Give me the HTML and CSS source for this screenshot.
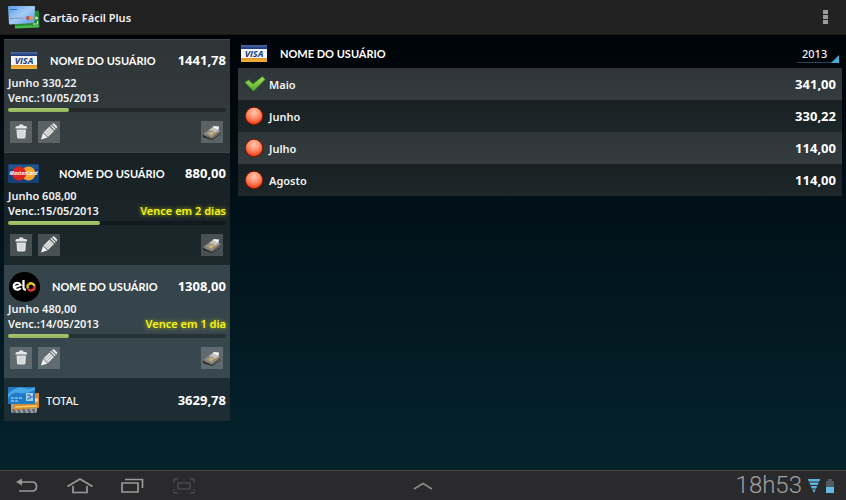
FILE: index.html
```html
<!DOCTYPE html>
<html lang="pt-BR">
<head>
    <meta charset="UTF-8">
    <meta name="viewport" content="width=device-width, initial-scale=1.0">
    <title>Cartão Fácil Plus</title>
    <link rel="stylesheet" href="styles.css">
</head>
<body>
    <!-- Shared icons -->
    <svg class="sprite" aria-hidden="true">
        <defs>
            <linearGradient id="visaBlue" x1="0" y1="0" x2="0" y2="1">
                <stop offset="0" stop-color="#4a68ae"/>
                <stop offset="1" stop-color="#1d3674"/>
            </linearGradient>
            <linearGradient id="visaGold" x1="0" y1="0" x2="0" y2="1">
                <stop offset="0" stop-color="#d9962c"/>
                <stop offset="1" stop-color="#f3b53b"/>
            </linearGradient>
            <radialGradient id="redBall" cx=".5" cy=".3" r=".7">
                <stop offset="0" stop-color="#ffc9ae"/>
                <stop offset=".5" stop-color="#ff8f6b"/>
                <stop offset="1" stop-color="#f03c14"/>
            </radialGradient>
            <linearGradient id="greenTick" x1="0" y1="0" x2="0" y2="1">
                <stop offset="0" stop-color="#a5e05a"/>
                <stop offset="1" stop-color="#4fae2c"/>
            </linearGradient>
            <linearGradient id="skyCard" x1="0" y1="0" x2="1" y2="1">
                <stop offset="0" stop-color="#5d9be6"/>
                <stop offset=".5" stop-color="#a4ccf4"/>
                <stop offset="1" stop-color="#5b93dc"/>
            </linearGradient>
        </defs>
        <symbol id="trash" viewBox="0 0 22 22">
            <path d="M5.500 7.500V6.500q0-1.500 1.500-1.500h2l.5-1.500h3.500l.5 1.500h2q1.500 0 1.500 1.500v1z" fill="#e6e8e8"/>
            <path d="M6.500 8.500h9.500l-.5 7.500q0 1.500-1.500 1.500H8.500Q7 17.500 7 16z" fill="#dfe1e1"/>
            <path d="M9.500 10v6M11.300 10v6M13 10v6" stroke="#c3c7c8" stroke-width=".6"/>
        </symbol>
        <symbol id="pencil" viewBox="0 0 22 22">
            <path d="M3 18.500l2-6.500 4.500 4.500z" fill="#f0f0f0"/>
            <path d="M5.500 11.500l6-6 4.500 4.500-6 6z" fill="#dfe1e1"/>
            <path d="M12.200 4.800l1-1 4.500 4.500-1 1zM14 3.200l.5-.5q1-.8 2 0l2.300 2.300q.8 1 0 2l-.5.500z" fill="#e9eaea"/>
            <path d="M7.500 12.500l5.500-5.500M9 14l5.500-5.500" stroke="#a5aaab" stroke-width=".7"/>
        </symbol>
        <symbol id="money" viewBox="0 0 22 22">
            <path d="M2 14l10-7 8 4v2l-9 6-9-3z" fill="#24231f"/>
            <path d="M2 13l10-7 8 4.500-9 6.500z" fill="#8b8981"/>
            <path d="M3 14l8 3.500 9-5.500" stroke="#b3b0a5" stroke-width=".6" fill="none"/>
            <path d="M8 9l4-3 6 3-4 3z" fill="#c4c3bb"/>
            <path d="M11.500 6l1.500-1 5 .5-.5 3.500z" fill="#f5f4f0"/>
            <path d="M6 12l4-3 4 2-4 3.500z" fill="#a09d92"/>
            <path d="M8 13l3-2 2 .5-2.500 3z" fill="#d9b65a"/>
        </symbol>
        <symbol id="open" viewBox="0 0 20 20">
            <circle cx="10" cy="10" r="9.300" fill="#6f1509"/>
            <circle cx="10" cy="10" r="8.300" fill="url(#redBall)"/>
        </symbol>
        <symbol id="paid" viewBox="0 0 22 18">
            <path d="M1 7.500L4.500 5l4.500 4L18.500 1.500 21 4.500 9.500 16z" fill="url(#greenTick)" stroke="#3c8e22" stroke-width=".8"/>
        </symbol>
    </svg>

    <header class="topbar">
        <svg class="app-logo" viewBox="0 0 32 23" aria-hidden="true">
            <path d="M6 7l25-2.500.5 16.500L7 22z" fill="#258a31"/>
            <path d="M7 20l24-1v2.500L7 22.500z" fill="#46b74c"/>
            <circle cx="28.500" cy="12" r="1.500" fill="#c8e8c5"/>
            <path d="M25 18h4.500v-3" stroke="#d5ead2" fill="none"/>
            <path d="M0 1q0-1 1-1h25q1 0 1 1l-.5 15q0 1-1 1L2 18.500q-1 0-1-1z" fill="url(#skyCard)"/>
            <path d="M2 3.500h7" stroke="#356fb9"/>
            <path d="M2 12.500l13-.5" stroke="#8090ad"/>
            <circle cx="20" cy="12" r="2" fill="#bd4d59"/>
            <circle cx="23" cy="12" r="2" fill="#d99b57"/>
        </svg>
        <h1 class="app-title">Cartão Fácil Plus</h1>
        <button class="menu-button" type="button" aria-label="Menu">
            <svg width="5" height="15" viewBox="0 0 5 15"><path d="M0 0h5v4H0zM0 5h5v4H0zM0 10h5v4H0z" fill="#9c9c9c"/></svg>
        </button>
    </header>

    <main class="content">
        <aside class="cards">
            <section class="card card-visa">
                <div class="card-head">
                    <svg class="brand brand-visa" viewBox="0 0 26 17" role="img" aria-label="Visa">
                        <rect width="26" height="17" rx="1" fill="#f4f4f6"/>
                        <path d="M0 4V1q0-1 1-1h24q1 0 1 1v3z" fill="url(#visaBlue)"/>
                        <path d="M0 13h26v3q0 1-1 1H1q-1 0-1-1z" fill="url(#visaGold)"/>
                        <text x="13" y="12" text-anchor="middle" class="visa-text">VISA</text>
                    </svg>
                    <h2 class="user-name">NOME DO USUÁRIO</h2>
                    <strong class="amount">1441,78</strong>
                </div>
                <p class="line">Junho 330,22</p>
                <p class="line">Venc.:10/05/2013</p>
                <progress class="limit" max="100" value="28" aria-label="Limite usado"></progress>
                <div class="actions">
                    <button type="button" aria-label="Excluir"><svg><use href="#trash"/></svg></button>
                    <button type="button" aria-label="Editar"><svg><use href="#pencil"/></svg></button>
                    <button class="pay" type="button" aria-label="Pagar"><svg><use href="#money"/></svg></button>
                </div>
            </section>

            <section class="card card-master">
                <div class="card-head">
                    <svg class="brand brand-master" viewBox="0 0 31 19" role="img" aria-label="MasterCard">
                        <rect width="31" height="19" rx="1" fill="#164179"/>
                        <path d="M1 1h29v4H1z" fill="#1e568f"/>
                        <circle cx="20.500" cy="9.500" r="7" fill="#f2a62e"/>
                        <circle cx="11" cy="9.500" r="7" fill="#dc241f"/>
                        <text x="15.500" y="11" text-anchor="middle" class="master-text">MasterCard</text>
                    </svg>
                    <h2 class="user-name">NOME DO USUÁRIO</h2>
                    <strong class="amount">880,00</strong>
                </div>
                <p class="line">Junho 608,00</p>
                <p class="line">Venc.:15/05/2013 <span class="due">Vence em 2 dias</span></p>
                <progress class="limit" max="100" value="42" aria-label="Limite usado"></progress>
                <div class="actions">
                    <button type="button" aria-label="Excluir"><svg><use href="#trash"/></svg></button>
                    <button type="button" aria-label="Editar"><svg><use href="#pencil"/></svg></button>
                    <button class="pay" type="button" aria-label="Pagar"><svg><use href="#money"/></svg></button>
                </div>
            </section>

            <section class="card card-elo">
                <div class="card-head">
                    <svg class="brand brand-elo" viewBox="0 0 31 30" role="img" aria-label="Elo">
                        <ellipse cx="15.500" cy="15" rx="15.500" ry="15" fill="#000"/>
                        <path d="M5 15.500l6.500-2.500q-1.500-3-4.500-2-3 1.500-2 4.500 1.500 3 4.500 2 1.500-.5 2-1.500M14.500 8v7.500q0 2.500 2.500 2" fill="none" stroke="#fff" stroke-width="2.200"/>
                        <path d="M19 16.500a3.500 3.500 0 0 1 1-4.500" fill="none" stroke="#e2b820" stroke-width="2.400"/>
                        <path d="M20 12a3.500 3.500 0 0 1 5.500 2" fill="none" stroke="#f3cf21" stroke-width="2.400"/>
                        <path d="M25.500 14a3.500 3.500 0 0 1-6.500 2.500" fill="none" stroke="#e23a28" stroke-width="2.400"/>
                    </svg>
                    <h2 class="user-name">NOME DO USUÁRIO</h2>
                    <strong class="amount">1308,00</strong>
                </div>
                <p class="line">Junho 480,00</p>
                <p class="line">Venc.:14/05/2013 <span class="due">Vence em 1 dia</span></p>
                <progress class="limit" max="100" value="28" aria-label="Limite usado"></progress>
                <div class="actions">
                    <button type="button" aria-label="Excluir"><svg><use href="#trash"/></svg></button>
                    <button type="button" aria-label="Editar"><svg><use href="#pencil"/></svg></button>
                    <button class="pay" type="button" aria-label="Pagar"><svg><use href="#money"/></svg></button>
                </div>
            </section>

            <section class="card card-total">
                <svg class="total-icon" viewBox="0 0 32 27" aria-hidden="true">
                    <path d="M3 12h26v12q0 2-2 2H5q-2 0-2-2z" fill="#9aa3a8"/>
                    <path d="M4 23h24M5 25h22" stroke="#2f383c" stroke-dasharray="3 2"/>
                    <path d="M5 7l26-1v14q0 1-1 1L6 23z" fill="#d98a2b"/>
                    <path d="M7 20l22-1" stroke="#f6cf74" stroke-width="1.500"/>
                    <circle cx="28" cy="13" r="2" fill="#f3d9a2"/>
                    <path d="M0 1q0-1 1-1h25q1 0 1 1v15q0 1-1 1H1q-1 0-1-1z" fill="#1f7cc4"/>
                    <path d="M0 7q8-8 16-6T27 0v3Q18 7 11 6T0 11z" fill="#48a8e4"/>
                    <path d="M3 11h12M3 14h7" stroke="#bfe0f5" stroke-dasharray="3 1"/>
                    <path d="M18 6h7v8h-7z" fill="#a8cfea"/>
                    <path d="M19 8h3v2h3M20 13v-2h3" stroke="#2a68a8" fill="none"/>
                </svg>
                <span class="total-label">TOTAL</span>
                <strong class="amount">3629,78</strong>
            </section>
        </aside>

        <section class="detail">
            <div class="detail-head">
                <svg class="detail-brand" viewBox="0 0 26 17" role="img" aria-label="Visa">
                    <rect width="26" height="17" rx="1" fill="#f4f4f6"/>
                    <path d="M0 4V1q0-1 1-1h24q1 0 1 1v3z" fill="url(#visaBlue)"/>
                    <path d="M0 13h26v3q0 1-1 1H1q-1 0-1-1z" fill="url(#visaGold)"/>
                    <text x="13" y="12" text-anchor="middle" class="visa-text">VISA</text>
                </svg>
                <h2 class="user-name">NOME DO USUÁRIO</h2>
                <div class="year">
                    <select aria-label="Ano">
                        <option>2013</option>
                    </select>
                </div>
            </div>
            <table class="months">
                <tr>
                    <td class="status"><svg class="tick" role="img" aria-label="Pago"><use href="#paid"/></svg></td>
                    <th scope="row">Maio</th>
                    <td class="amount">341,00</td>
                </tr>
                <tr>
                    <td class="status"><svg role="img" aria-label="Em aberto"><use href="#open"/></svg></td>
                    <th scope="row">Junho</th>
                    <td class="amount">330,22</td>
                </tr>
                <tr>
                    <td class="status"><svg role="img" aria-label="Em aberto"><use href="#open"/></svg></td>
                    <th scope="row">Julho</th>
                    <td class="amount">114,00</td>
                </tr>
                <tr>
                    <td class="status"><svg role="img" aria-label="Em aberto"><use href="#open"/></svg></td>
                    <th scope="row">Agosto</th>
                    <td class="amount">114,00</td>
                </tr>
            </table>
        </section>
    </main>

    <footer class="navbar">
        <div class="nav-keys">
            <button type="button" aria-label="Voltar">
                <svg viewBox="0 0 26 18"><path d="M5 5h12q4.500 0 4.500 4.500T17 14H4" fill="none" stroke="#999" stroke-width="1.700"/><path d="M1 5l6-3.500v7z" fill="#999"/></svg>
            </button>
            <button type="button" aria-label="Início">
                <svg viewBox="0 0 26 18"><path d="M.5 9.500L13 2l12.500 7.500M6 9v6.500h14V9" fill="none" stroke="#999" stroke-width="1.700"/></svg>
            </button>
            <button type="button" aria-label="Recentes">
                <svg viewBox="0 0 26 18"><path d="M3 6h16v9H3zM6 2.500h17.500V11" fill="none" stroke="#999" stroke-width="1.700"/></svg>
            </button>
            <button type="button" aria-label="Capturar tela">
                <svg viewBox="0 0 26 18"><path d="M3 6V2h4M19 2h4v4M23 12v4h-4M7 16H3v-4M7 6h12v6H7z" fill="none" stroke="#484849" stroke-width="1.500"/></svg>
            </button>
        </div>
        <button class="nav-up" type="button" aria-label="Aplicativos">
            <svg viewBox="0 0 20 8"><path d="M1 7l9-5.500L19 7" fill="none" stroke="#8c8c8c" stroke-width="1.500"/></svg>
        </button>
        <div class="status-area">
            <time class="clock" datetime="18:53">18h53</time>
            <svg width="12" height="14" viewBox="0 0 12 14" aria-label="Wi-Fi" role="img"><path d="M0 0h12l-.7 2.500H.7zM1.300 3.500h9.400L9.700 6H2.300zM2.800 7h6.400l-1 2.500H3.800zM4.300 10.500h3.400L6 14z" fill="#5cb6df"/></svg>
            <svg width="8" height="14" viewBox="0 0 8 14" aria-label="Bateria" role="img"><path d="M2 0h4v2h2v6H0V2h2z" fill="#555b5e"/><path d="M0 8h8v6H0z" fill="#62bbe3"/></svg>
        </div>
    </footer>
</body>
</html>
```

FILE: styles.css
```css
* {
    box-sizing: border-box;
}
body {
    margin: 0;
    min-height: 100vh;
    display: flex;
    flex-direction: column;
    background: linear-gradient(#000205, #00080e 20%, #021720 60%, #06252e);
    color: #f4f4f4;
    font-family: "Noto Sans", "Open Sans", sans-serif;
    font-size: 11px;
    line-height: 15px;
}
h1, h2, p {
    margin: 0;
}
button {
    padding: 0;
    border: 0;
    background: none;
    cursor: pointer;
}
svg {
    display: block;
}
.sprite {
    position: absolute;
    width: 0;
    height: 0;
}
.visa-text {
    font: italic bold 9px "Open Sans", sans-serif;
    fill: #1f3a7c;
}
.master-text {
    font: italic bold 5px "Open Sans", sans-serif;
    fill: #fff;
}

/* Top bar */
.topbar {
    display: flex;
    align-items: center;
    height: 35px;
    padding: 0 18px 0 8px;
    background: #222;
    border-bottom: 1px solid #191919;
}
.app-logo {
    width: 32px;
    height: 23px;
}
.app-title {
    margin-left: 3px;
    font-size: 11px;
    font-weight: 600;
}
.menu-button {
    margin-left: auto;
}

/* Layout */
.content {
    flex: 1;
    display: grid;
    grid-template-columns: 226px 1fr;
    gap: 8px;
    align-items: start;
    padding: 4px 4px 0;
}

/* Card list */
.card {
    padding: 0 4px 9px;
    border-top: 1px solid #3c4548;
}
.card-visa {
    background: linear-gradient(#2e3537, #343d40);
}
.card-master {
    background: linear-gradient(#192124, #1a272b);
}
.card-elo {
    background: linear-gradient(#35434a, #38484f);
}
.card-total {
    display: flex;
    align-items: center;
    height: 43px;
    padding-bottom: 0;
    background: #1d2d33;
    border-top-color: #1d2d33;
}
.card-head {
    display: flex;
    align-items: center;
    height: 35px;
    padding-top: 6px;
}
.brand-visa {
    width: 26px;
    height: 17px;
    margin: 0 13px 0 3px;
}
.brand-master {
    width: 31px;
    height: 19px;
    margin-right: 20px;
}
.brand-elo {
    width: 31px;
    height: 30px;
    margin: 0 12px 0 1px;
}
.user-name {
    color: #fff;
    font-family: Lato, sans-serif;
    font-size: 11px;
    font-weight: 700;
    white-space: nowrap;
}
.amount {
    margin-left: auto;
    color: #fff;
    font-size: 13px;
    font-weight: 700;
}
.line {
    display: flex;
    justify-content: space-between;
    font-weight: 600;
}
.due {
    color: #f2f21c;
    text-shadow: 0 0 4px #c8c800;
}
.limit {
    display: block;
    width: 100%;
    height: 4px;
    margin-top: 3px;
    appearance: none;
    border: 0;
    border-radius: 2px;
    background: rgba(0, 0, 0, 0.2);
}
.limit::-webkit-progress-bar {
    border-radius: 2px;
    background: rgba(0, 0, 0, 0.1);
}
.limit::-webkit-progress-value {
    border-radius: 2px;
    background: linear-gradient(#a9c873, #93b658);
}
.actions {
    display: flex;
    gap: 6px;
    margin-top: 9px;
    padding: 0 3px 0 2px;
}
.actions button {
    background: rgba(255, 255, 255, 0.2);
}
.actions svg {
    width: 22px;
    height: 22px;
}
.actions .pay {
    margin-left: auto;
}
.total-icon {
    width: 32px;
    height: 27px;
}
.total-label {
    margin-left: 6px;
    font-weight: 500;
}

/* Months */
.detail-head {
    display: flex;
    align-items: center;
    height: 29px;
    padding: 0 3px;
}
.detail-brand {
    width: 26px;
    height: 17px;
    margin-right: 13px;
}
.year {
    position: relative;
    margin-left: auto;
    border-bottom: 1px solid #24485c;
}
.year::after {
    content: "";
    position: absolute;
    right: 0;
    bottom: -1px;
    border-left: 8px solid transparent;
    border-bottom: 8px solid #41acd8;
    pointer-events: none;
}
.year select {
    display: block;
    width: 42px;
    height: 18px;
    padding: 0 0 0 5px;
    appearance: none;
    border: 0;
    background: transparent;
    color: inherit;
    font: 500 11px "Noto Sans", "Open Sans", sans-serif;
}
.year option {
    background: #1b2326;
}
.months {
    width: 100%;
    border-collapse: collapse;
}
.months tr {
    height: 32px;
    background: linear-gradient(#182022, #1d2628);
}
.months tr:nth-child(odd) {
    background: linear-gradient(#2f3639, #343c3f);
}
.months th, .months td {
    padding: 0;
}
.months th {
    font-weight: 600;
    text-align: left;
}
.months .status {
    width: 31px;
    padding-left: 6px;
}
.months .status svg {
    width: 20px;
    height: 20px;
}
.months .status .tick {
    width: 22px;
}
.months .amount {
    padding-right: 6px;
    text-align: right;
}

/* System bar */
.navbar {
    display: grid;
    grid-template-columns: 1fr auto 1fr;
    align-items: center;
    height: 30px;
    background: #2a2a2c;
    border-top: 1px solid #424446;
}
.nav-keys {
    display: flex;
    gap: 26px;
    padding-left: 15px;
}
.nav-keys svg {
    width: 26px;
    height: 18px;
}
.nav-up svg {
    width: 20px;
    height: 8px;
}
.status-area {
    display: flex;
    justify-content: flex-end;
    align-items: center;
    gap: 6px;
    padding-right: 12px;
}
.clock {
    color: #a0a0a0;
    font-family: Roboto, sans-serif;
    font-size: 24px;
    font-weight: 300;
    line-height: 29px;
}
```
